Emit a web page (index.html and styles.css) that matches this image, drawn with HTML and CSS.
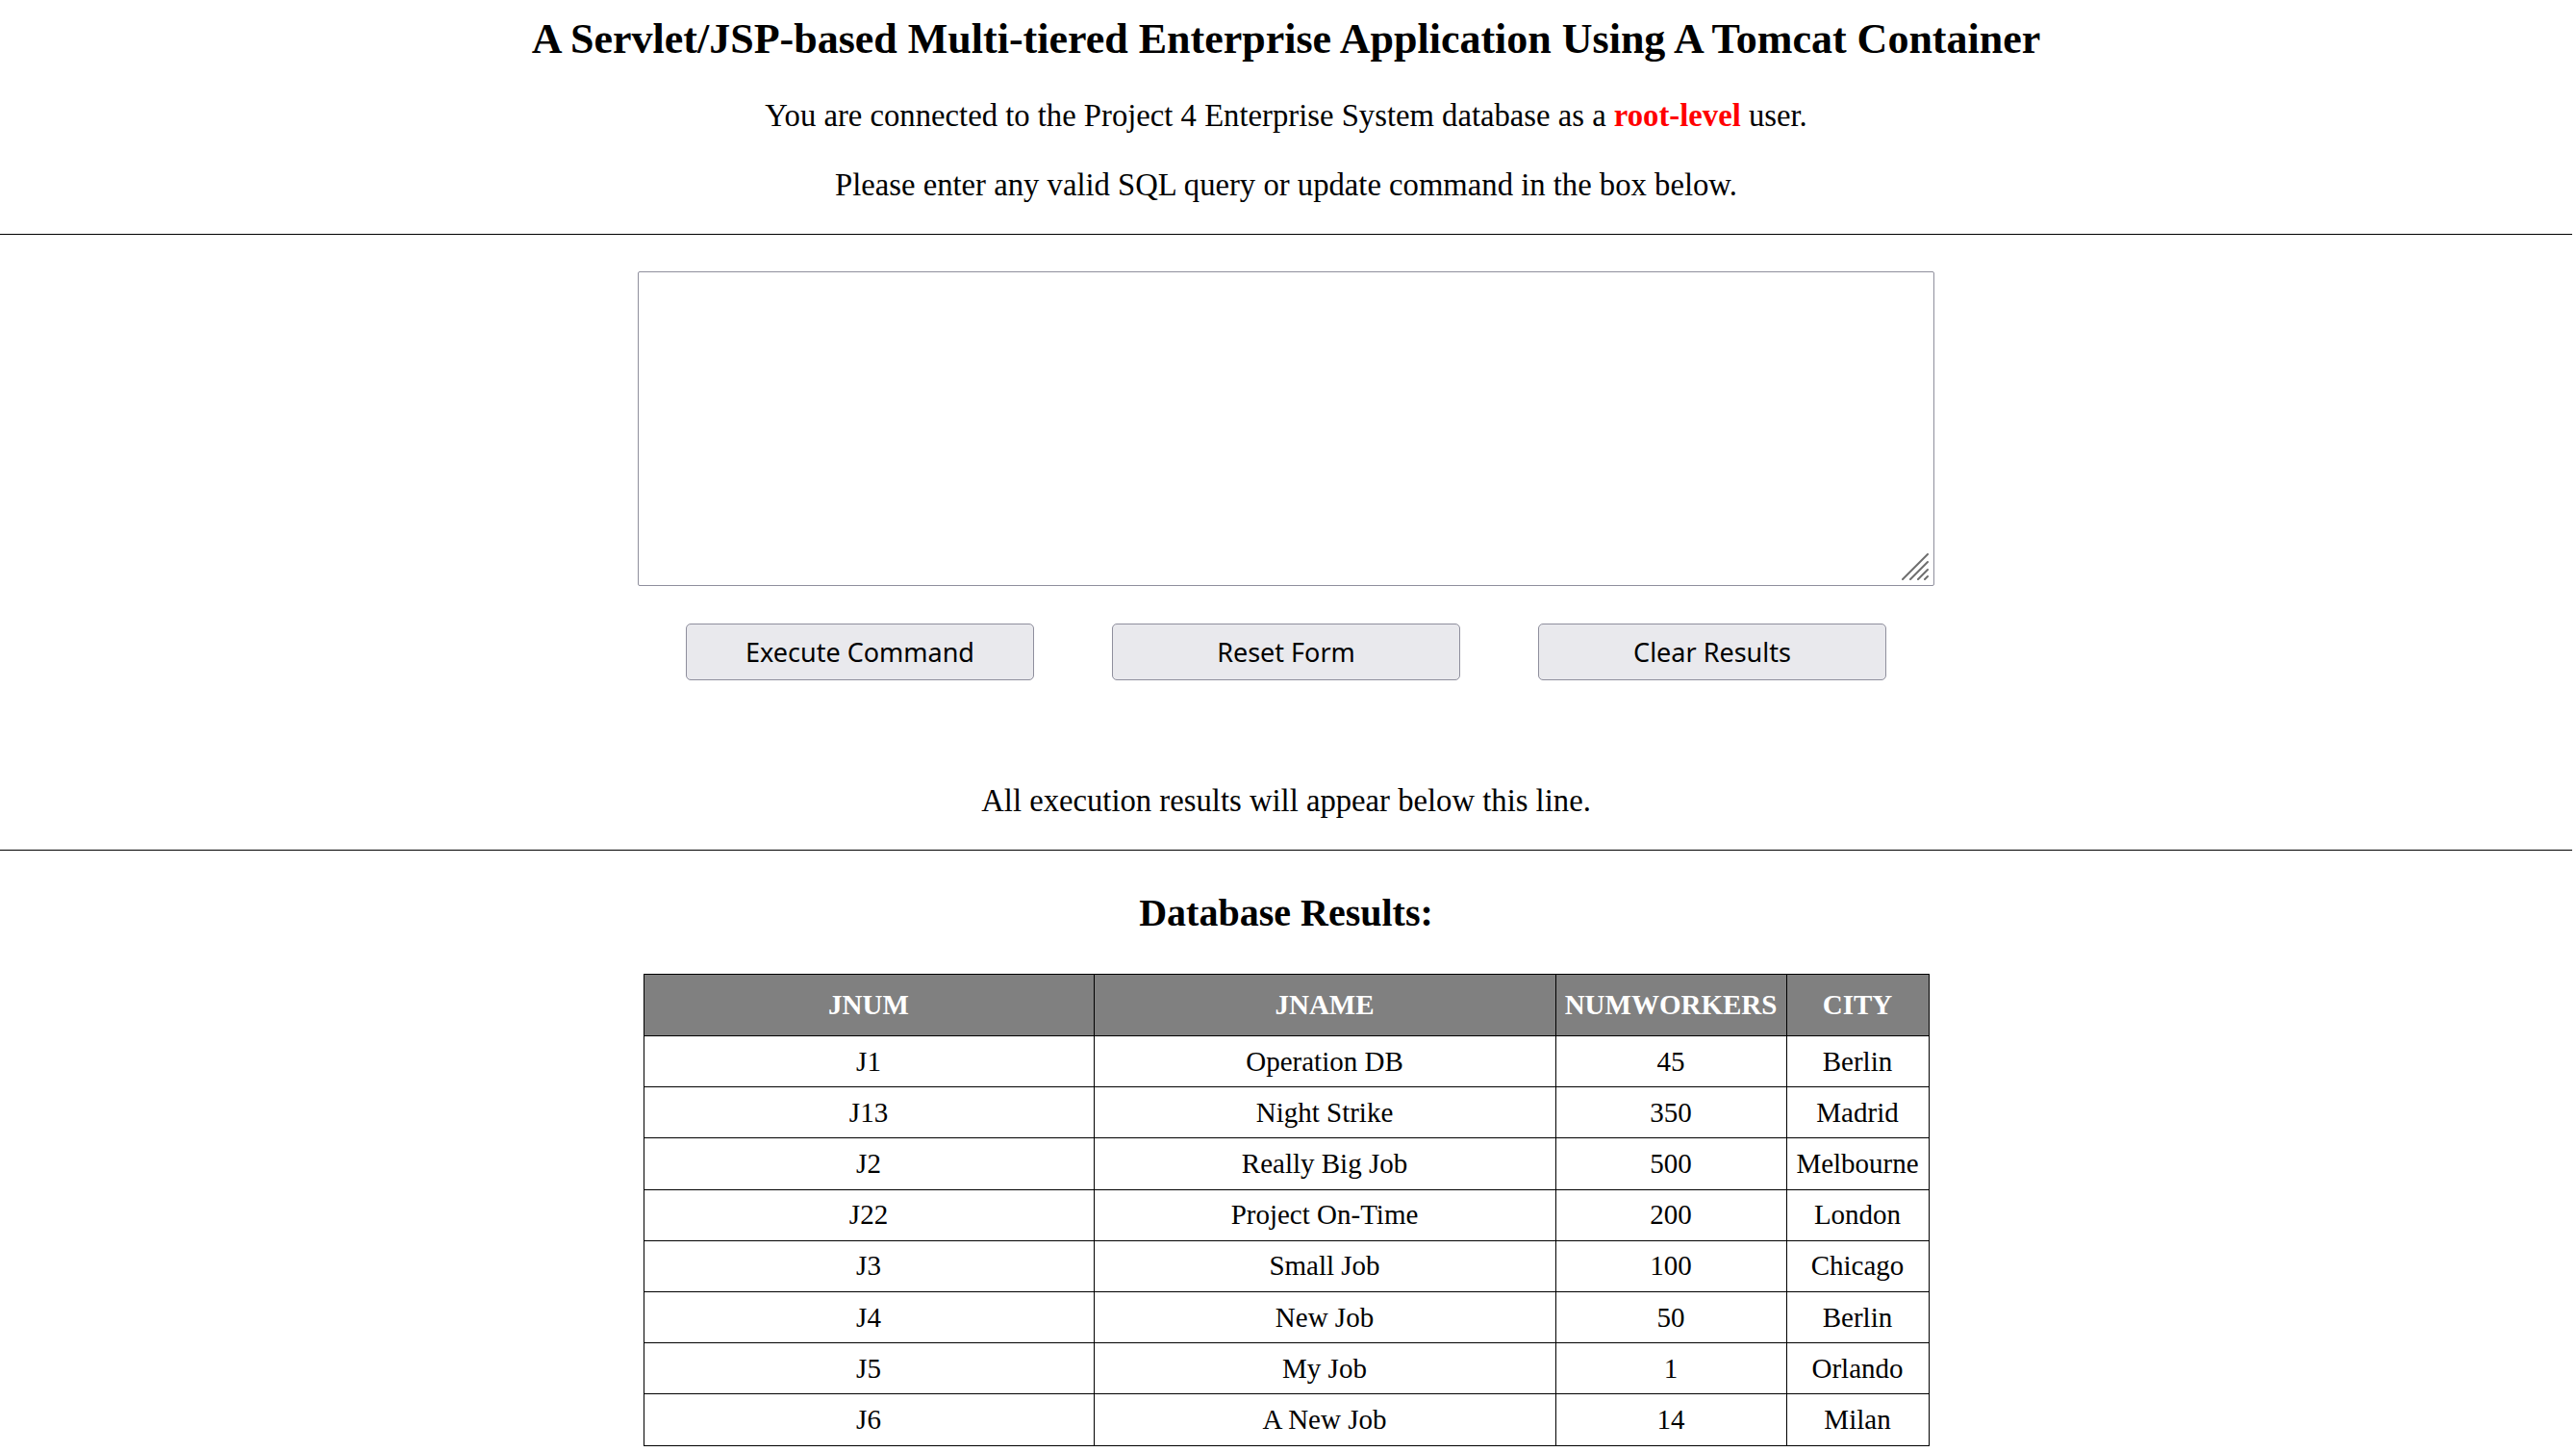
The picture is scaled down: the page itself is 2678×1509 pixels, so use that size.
FILE: index.html
```html
<!DOCTYPE html>
<html lang="en">
<head>
<meta charset="utf-8">
<title>Project 4 Enterprise System</title>
<link rel="stylesheet" href="styles.css">
</head>
<body>
<div class="page">
  <h1 class="title">A Servlet/JSP-based Multi-tiered Enterprise Application Using A Tomcat Container</h1>
  <p class="info first">You are connected to the Project 4 Enterprise System database as a <span class="role">root-level</span> user.</p>
  <p class="info second">Please enter any valid SQL query or update command in the box below.</p>
  <hr class="rule top-rule">
  <form class="sql-form">
    <div class="editor-row">
      <div class="editor">
        <textarea class="sql-input" name="sql"></textarea>
        <svg class="grip" width="28" height="28" viewBox="0 0 28 28" aria-hidden="true">
          <line x1="1" y1="27" x2="27" y2="1"/>
          <line x1="9" y1="27" x2="27" y2="9"/>
          <line x1="17" y1="27" x2="27" y2="17"/>
          <line x1="24" y1="27" x2="27" y2="24"/>
        </svg>
      </div>
    </div>
    <div class="actions">
      <button type="button" class="btn">Execute Command</button>
      <button type="button" class="btn">Reset Form</button>
      <button type="button" class="btn">Clear Results</button>
    </div>
  </form>
  <p class="info notice">All execution results will appear below this line.</p>
  <hr class="rule bottom-rule">
  <h2 class="results-title">Database Results:</h2>
  <table class="results">
    <colgroup>
      <col class="c-jnum">
      <col class="c-jname">
      <col class="c-num">
      <col class="c-city">
    </colgroup>
    <thead>
      <tr><th>JNUM</th><th>JNAME</th><th>NUMWORKERS</th><th>CITY</th></tr>
    </thead>
    <tbody>
      <tr><td>J1</td><td>Operation DB</td><td>45</td><td>Berlin</td></tr>
      <tr><td>J13</td><td>Night Strike</td><td>350</td><td>Madrid</td></tr>
      <tr><td>J2</td><td>Really Big Job</td><td>500</td><td>Melbourne</td></tr>
      <tr><td>J22</td><td>Project On-Time</td><td>200</td><td>London</td></tr>
      <tr><td>J3</td><td>Small Job</td><td>100</td><td>Chicago</td></tr>
      <tr><td>J4</td><td>New Job</td><td>50</td><td>Berlin</td></tr>
      <tr><td>J5</td><td>My Job</td><td>1</td><td>Orlando</td></tr>
      <tr><td>J6</td><td>A New Job</td><td>14</td><td>Milan</td></tr>
    </tbody>
  </table>
</div>
</body>
</html>
```

FILE: styles.css
```css
html, body {
  margin: 0;
  padding: 0;
  background: #ffffff;
}

body {
  font-family: "Liberation Serif", "Times New Roman", serif;
  color: #000000;
}

.page {
  width: calc(100% - 4px);
  text-align: center;
}

.title {
  font-size: 44px;
  font-weight: bold;
  line-height: normal;
  margin: 15px 0 0;
}

.info {
  font-size: 32.7px;
  line-height: normal;
  margin: 0;
}

.info.first {
  margin-top: 36px;
}

.info.second {
  margin-top: 35px;
}

.role {
  color: #ff0000;
  font-weight: bold;
}

.rule {
  border: 0;
  border-top: 1px solid #000000;
  height: 0;
  margin: 0;
}

.top-rule {
  margin-top: 32px;
}

.sql-form {
  margin: 38px 0 0;
}

.editor-row {
  display: flex;
  justify-content: center;
}

.editor {
  position: relative;
  width: 1348px;
  height: 327px;
}

.sql-input {
  display: block;
  box-sizing: border-box;
  width: 1348px;
  height: 327px;
  margin: 0;
  border: 1px solid #8f8f9d;
  border-radius: 2px;
  background: #ffffff;
  resize: none;
  font-family: "Liberation Mono", monospace;
  font-size: 24px;
  padding: 4px;
}

.grip {
  position: absolute;
  right: 6px;
  bottom: 6px;
  stroke: #6e6e6e;
  stroke-width: 2;
  stroke-linecap: round;
  pointer-events: none;
}

.actions {
  display: flex;
  justify-content: center;
  gap: 81px;
  margin-top: 39px;
}

.btn {
  box-sizing: border-box;
  width: 362px;
  height: 59px;
  margin: 0;
  padding: 0;
  border: 1px solid #8f8f9d;
  border-radius: 5px;
  background: #e9e9ed;
  color: #000000;
  font-family: "Noto Sans", "DejaVu Sans", sans-serif;
  font-size: 27px;
  line-height: 1;
}

.notice {
  margin-top: 107px;
}

.bottom-rule {
  margin-top: 32px;
}

.results-title {
  font-size: 40px;
  font-weight: bold;
  line-height: normal;
  margin: 41px 0 0;
}

.results {
  width: 1336px;
  margin: 40px auto 0;
  border-collapse: collapse;
  table-layout: fixed;
  font-size: 29px;
}

.c-jnum { width: 468px; }
.c-jname { width: 480px; }
.c-num { width: 240px; }
.c-city { width: 148px; }

.results th,
.results td {
  border: 1px solid #000000;
  text-align: center;
  line-height: normal;
  white-space: nowrap;
}

.results th {
  background: #808080;
  color: #ffffff;
  font-weight: bold;
  padding: 15px 4px;
}

.results td {
  padding: 9.6px 4px;
}
```
